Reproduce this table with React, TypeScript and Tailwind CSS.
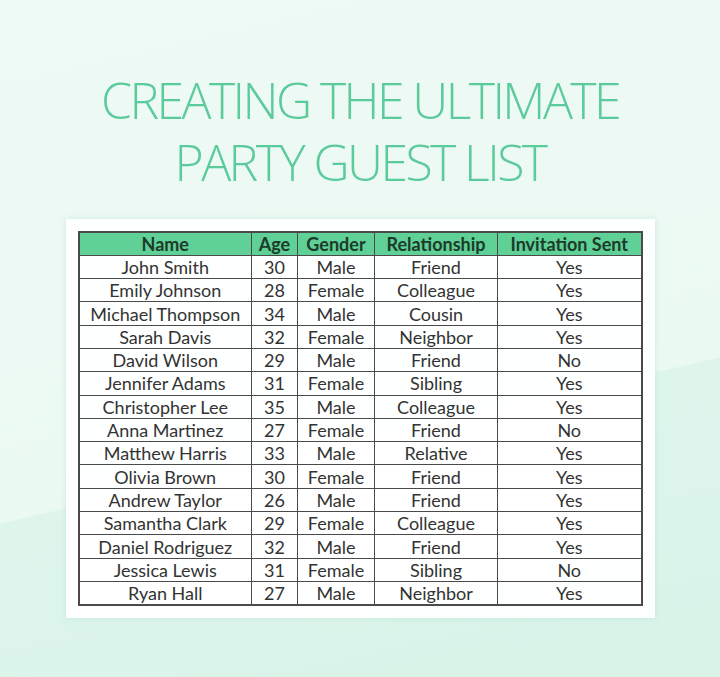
const guests: [string, number, string, string, string][] = [
  ['John Smith', 30, 'Male', 'Friend', 'Yes'],
  ['Emily Johnson', 28, 'Female', 'Colleague', 'Yes'],
  ['Michael Thompson', 34, 'Male', 'Cousin', 'Yes'],
  ['Sarah Davis', 32, 'Female', 'Neighbor', 'Yes'],
  ['David Wilson', 29, 'Male', 'Friend', 'No'],
  ['Jennifer Adams', 31, 'Female', 'Sibling', 'Yes'],
  ['Christopher Lee', 35, 'Male', 'Colleague', 'Yes'],
  ['Anna Martinez', 27, 'Female', 'Friend', 'No'],
  ['Matthew Harris', 33, 'Male', 'Relative', 'Yes'],
  ['Olivia Brown', 30, 'Female', 'Friend', 'Yes'],
  ['Andrew Taylor', 26, 'Male', 'Friend', 'Yes'],
  ['Samantha Clark', 29, 'Female', 'Colleague', 'Yes'],
  ['Daniel Rodriguez', 32, 'Male', 'Friend', 'Yes'],
  ['Jessica Lewis', 31, 'Female', 'Sibling', 'No'],
  ['Ryan Hall', 27, 'Male', 'Neighbor', 'Yes'],
];

const headers = ['Name', 'Age', 'Gender', 'Relationship', 'Invitation Sent'];

export default function App() {
  return (
    <div className="w-[720px] h-[677px] overflow-hidden bg-[linear-gradient(167deg,#eefaf5_0%,#ebf9f3_62%,#def5ec_62.2%,#d9f3e9_100%)] flex flex-col items-center">
      <h1 className="mt-[69px] text-center text-[#5ccb9c] text-[50px] leading-[62px] font-light tracking-[-2.6px] font-['Open_Sans',sans-serif]">
        CREATING THE ULTIMATE
        <br />
        PARTY GUEST LIST
      </h1>
      <div className="mt-[26px] bg-white/95 px-[12px] pt-[12px] pb-[12px] shadow-[0_0_6px_rgba(180,225,205,0.6)]">
        <table className="border-collapse border-2 border-[#4a4a4a] font-['Lato',sans-serif] text-[18px] text-[#333]">
          <colgroup>
            <col className="w-[173px]" />
            <col className="w-[46px]" />
            <col className="w-[77px]" />
            <col className="w-[123px]" />
            <col className="w-[144px]" />
          </colgroup>
          <thead>
            <tr className="bg-[#5fd096] h-[23.3px]">
              {headers.map((h) => (
                <th key={h} className="border border-[#4a4a4a] p-0 font-bold text-[#1c3b2a] leading-none">
                  {h}
                </th>
              ))}
            </tr>
          </thead>
          <tbody>
            {guests.map((g) => (
              <tr key={g[0]} className="h-[23.3px]">
                {g.map((c, i) => (
                  <td key={i} className="border border-[#4a4a4a] p-0 text-center leading-none">
                    {c}
                  </td>
                ))}
              </tr>
            ))}
          </tbody>
        </table>
      </div>
    </div>
  );
}
